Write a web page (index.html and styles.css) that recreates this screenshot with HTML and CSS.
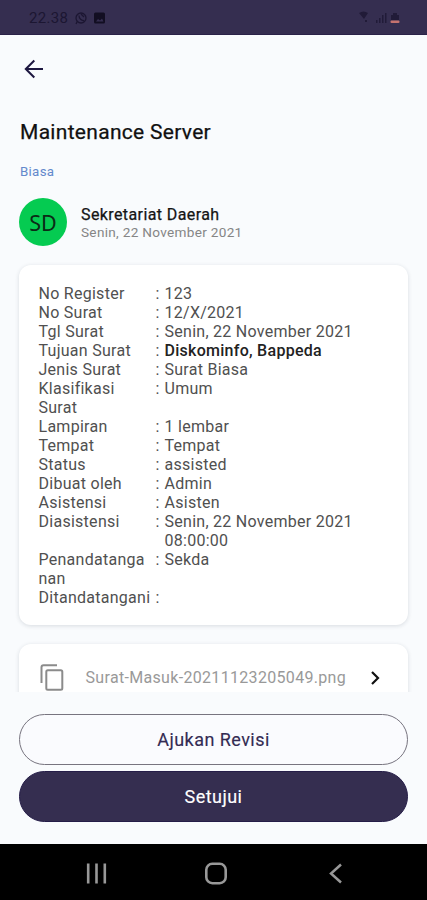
FILE: index.html
```html
<!DOCTYPE html>
<html lang="id">
<head>
<meta charset="utf-8">
<meta name="viewport" content="width=device-width">
<title>Maintenance Server</title>
<link rel="stylesheet" href="styles.css">
</head>
<body>
<header class="status">
  <span class="time">22.38</span>
  <svg class="s-left" width="32" height="14" viewBox="0 0 32 14"><g fill="none" stroke="#1c1632" stroke-width="1.3"><circle cx="6" cy="7" r="5"/><path d="M1 13l1.500-3M4 4.500c0 3 2.500 5.500 5 5M6 3l3 3"/></g><rect x="19" y="1.500" width="11" height="11" rx="1.500" fill="#120e22"/><path d="M21 10.500l2-2.500 2 1.500 2-2 1.500 3z" fill="#352e50"/></svg>
  <svg class="s-right" width="42" height="14" viewBox="0 0 42 14"><path d="M0 2q4.500-3 9 0L5 8zM6 9h2v2H6z" fill="#211b38"/><path d="M17 9h1.500v3H17zM20 7h1.500v5H20zM23 4h1.500v8H23zM26 2h1.500v10H26z" fill="#211b38"/><path d="M34 2h4v2h2v5h-8V4h2z" fill="#211b38"/><rect x="31.500" y="9.500" width="9" height="2.500" rx="1" fill="#c5736f"/></svg>
</header>
<main class="content">
  <svg class="back" width="20" height="20" viewBox="0 0 20 20" fill="none" stroke="#1d1740" stroke-width="2"><path d="M19 10H2M10.300 1.500L1.800 10l8.500 8.500"/></svg>
  <h1>Maintenance Server</h1>
  <p class="tag">Biasa</p>
  <section class="sender">
    <div class="avatar">SD</div>
    <div class="who"><p class="name">Sekretariat Daerah</p><p class="date">Senin, 22 November 2021</p></div>
  </section>
  <dl class="card details">
    <dt>No Register</dt><dd>123</dd>
    <dt>No Surat</dt><dd>12/X/2021</dd>
    <dt>Tgl Surat</dt><dd>Senin, 22 November 2021</dd>
    <dt>Tujuan Surat</dt><dd class="strong">Diskominfo, Bappeda</dd>
    <dt>Jenis Surat</dt><dd>Surat Biasa</dd>
    <dt>Klasifikasi<br>Surat</dt><dd>Umum</dd>
    <dt>Lampiran</dt><dd>1 lembar</dd>
    <dt>Tempat</dt><dd>Tempat</dd>
    <dt>Status</dt><dd>assisted</dd>
    <dt>Dibuat oleh</dt><dd>Admin</dd>
    <dt>Asistensi</dt><dd>Asisten</dd>
    <dt>Diasistensi</dt><dd>Senin, 22 November 2021<br>08:00:00</dd>
    <dt>Penandatanga<br>nan</dt><dd>Sekda</dd>
    <dt>Ditandatangani</dt><dd></dd>
  </dl>
  <section class="card file">
    <svg width="24" height="27" viewBox="0 0 24 27" fill="none" stroke="#8b8b8b" stroke-width="2"><path d="M17 1.200H3.500Q1.500 1.200 1.500 3.200V19"/><rect x="6.300" y="6.200" width="16" height="19.500" rx="1.500"/></svg>
    <span class="filename">Surat-Masuk-20211123205049.png</span>
    <svg class="chevron" width="9" height="14" viewBox="0 0 9 14" fill="none" stroke="#111" stroke-width="2.200"><path d="M1 1l6 6-6 6"/></svg>
  </section>
</main>
<footer class="actions">
  <button class="outline">Ajukan Revisi</button>
  <button class="filled">Setujui</button>
</footer>
<nav class="navbar">
  <svg width="427" height="56" viewBox="0 0 427 56" fill="none" stroke="#989898"><path d="M88.200 19.500v20M96.500 19.500v20M104.800 19.500v20" stroke-width="2.600"/><rect x="206.300" y="19.800" width="19.400" height="19.400" rx="6" stroke-width="2.600"/><path d="M341 20.500L331 29.500l10 9" stroke-width="2.500"/></svg>
</nav>
</body>
</html>
```
FILE: styles.css
```css
* { box-sizing: border-box; }
body { margin: 0; width: 427px; height: 900px; overflow: hidden; display: flex; flex-direction: column; background: #f9fbfd; font-family: Roboto, sans-serif; color: #444; }
h1, p, dl, dd { margin: 0; }
svg { display: block; flex: none; }
.status { height: 35px; flex: none; background: #352e50; border-bottom: 1px solid #2a2248; display: flex; align-items: center; padding: 2px 26px 0 29px; }
.time { font-size: 15px; letter-spacing: .3px; color: #1c1632; width: 46px; }
.s-right { margin-left: auto; }
.content { height: 657px; flex: none; overflow: hidden; padding: 23px 19px 0; }
.back { margin: 1px 0 0 5px; }
h1 { margin-top: 40px; font-size: 21px; line-height: 26px; font-weight: 400; letter-spacing: .3px; color: #101010; -webkit-text-stroke: .25px #101010; padding-left: 1px; }
.tag { margin-top: 19px; font-size: 13.3px; line-height: 16px; letter-spacing: .3px; color: #6389cc; padding-left: 1px; }
.sender { display: flex; align-items: center; gap: 14px; margin-top: 18px; height: 48px; }
.avatar { width: 48px; height: 48px; border-radius: 50%; background: #05cb51; color: #0b2b16; font: 21.5px/49px "Noto Sans", sans-serif; text-align: center; }
.who { padding-top: 2px; }
.name { font-size: 16px; line-height: 18px; font-weight: 400; letter-spacing: .4px; color: #151515; -webkit-text-stroke: .25px #151515; }
.date { font-size: 13.6px; line-height: 17px; letter-spacing: .3px; color: #858585; }
.card { background: #fff; border-radius: 12px; box-shadow: 0 1px 4px rgba(30, 40, 60, .15); }
.details { margin-top: 19px; height: 360px; padding: 20.3px 19px 0 19.5px; display: grid; grid-template-columns: 117px 1fr; align-content: start; font-size: 16px; line-height: 18.95px; letter-spacing: .27px; color: #505050; }
dt { white-space: nowrap; }
dd { display: flex; }
dd::before { content: ":"; width: 9px; flex: none; font-weight: 400; color: #505050; }
.strong { font-weight: 500; color: #222; }
.file { margin-top: 19px; height: 67px; padding: 0 28px 0 21px; display: flex; align-items: center; }
.filename { margin-left: 21.5px; font-size: 16px; letter-spacing: .32px; color: #999; white-space: nowrap; }
.chevron { margin-left: auto; }
.actions { flex: none; padding: 22px 19px 0; height: 152px; display: flex; flex-direction: column; gap: 6px; }
button { height: 51px; flex: none; border-radius: 26px; font: 400 18px Roboto, sans-serif; letter-spacing: .45px; padding: 0; -webkit-text-stroke: .15px currentColor; }
.outline { border: 1px solid #77747f; background: #fafbfe; color: #332b53; }
.filled { border: 1px solid #251d48; background: #352e50; color: #fff; }
.navbar { height: 56px; flex: none; background: #000; }
```
